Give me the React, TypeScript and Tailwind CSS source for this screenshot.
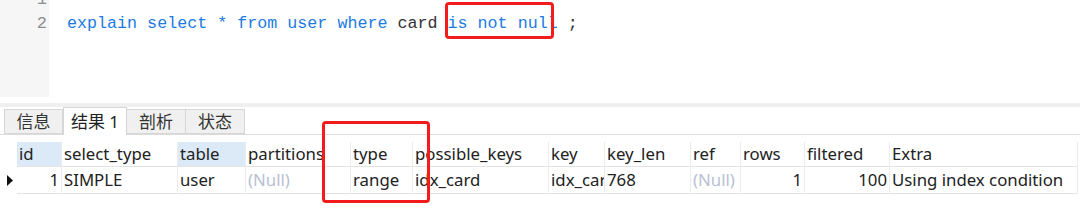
import React from "react";

const cols = [
  { key: "id", w: 45, hl: true, align: "right" },
  { key: "select_type", w: 116 },
  { key: "table", w: 68, hl: true },
  { key: "partitions", w: 105 },
  { key: "type", w: 62 },
  { key: "possible_keys", w: 136 },
  { key: "key", w: 56 },
  { key: "key_len", w: 86 },
  { key: "ref", w: 50 },
  { key: "rows", w: 64, align: "right" },
  { key: "filtered", w: 85, align: "right" },
  { key: "Extra", w: 188 },
];

const row: { v: string; nul?: boolean }[] = [
  { v: "1" },
  { v: "SIMPLE" },
  { v: "user" },
  { v: "(Null)", nul: true },
  { v: "range" },
  { v: "idx_card" },
  { v: "idx_card" },
  { v: "768" },
  { v: "(Null)", nul: true },
  { v: "1" },
  { v: "100" },
  { v: "Using index condition" },
];

const tabs = [
  { t: "信息", w: 59 },
  { t: "结果 1", w: 64, active: true },
  { t: "剖析", w: 59 },
  { t: "状态", w: 59 },
];

export default function App() {
  const ui = { fontFamily: '"Noto Sans", "Noto Sans CJK SC", sans-serif' };
  return (
    <div className="relative w-[1080px] h-[221px] bg-white overflow-hidden" style={ui}>
      {/* Editor */}
      <div className="flex h-[100px]">
        <div className="w-[49px] bg-[#f6f6f6] shrink-0 h-[97px] overflow-hidden">
          <div className="mt-[-12px] flex flex-col items-end pr-[2px] text-[17px] leading-[24px] text-[#8e8e8e]" style={{ fontFamily: '"Liberation Mono", monospace' }}>
            <div className="h-[24px]">1</div>
            <div className="h-[24px]">2</div>
          </div>
        </div>
        <div className="pl-[18px] pt-[12px] text-[16.7px] leading-[24px] whitespace-pre text-[#1b7be3]" style={{ fontFamily: '"Liberation Mono", monospace' }}>
          <span>explain select * from user where </span>
          <span className="text-[#333333]">card</span>
          <span> is not null</span>
          <span className="text-[#333333]"> ;</span>
        </div>
      </div>
      {/* splitter */}
      <div className="h-[3px]"></div>
      <div className="h-[4px] bg-[#efefef]"></div>
      {/* tabs */}
      <div className="flex items-end h-[28px] border-b border-[#dcdcdc] pl-[4px]">
        {tabs.map((t) => (
          <div
            key={t.t}
            className={
              t.active
                ? "h-[28px] mb-[-1px] bg-white border border-b-0 border-[#d6d6d6] flex items-center justify-center text-[17px] text-[#222]"
                : "h-[25px] bg-[#f0f0f0] border border-l-0 first:border-l border-[#d6d6d6] flex items-center justify-center text-[17px] text-[#333]"
            }
            style={{ width: t.w }}
          >
            {t.t}
          </div>
        ))}
      </div>
      {/* table */}
      <div className="mt-[7px] flex">
        <div className="w-[17px] shrink-0 flex flex-col">
          <div className="h-[25px]"></div>
          <div className="h-[27px] flex items-center pl-[7px]">
            <svg width="6" height="11" viewBox="0 0 6 11">
              <path d="M0 0 L6 5.5 L0 11 Z" fill="#111" />
            </svg>
          </div>
        </div>
        {cols.map((c, i) => (
          <div key={c.key} className="shrink-0 flex flex-col border-r border-[#ececec]" style={{ width: c.w }}>
            <div
              className={
                "h-[25px] border-b border-[#e3e3e3] px-[2px] flex items-center text-[16.8px] text-[#222] whitespace-nowrap overflow-hidden " +
                (c.hl ? "bg-[#dce9f6]" : "")
              }
            >
              {c.key}
            </div>
            <div
              className={
                "h-[27px] border-b border-[#e3e3e3] px-[2px] flex items-center text-[16.8px] whitespace-nowrap overflow-hidden " +
                (c.align === "right" ? "justify-end " : "") +
                (row[i].nul ? "text-[#b8c0d2]" : "text-[#222]")
              }
            >
              {row[i].v}
            </div>
          </div>
        ))}
      </div>
      {/* red highlights */}
      <div className="absolute left-[445px] top-[2px] w-[109px] h-[37px] border-[3px] border-[#f21c1c] rounded-[4px]"></div>
      <div className="absolute left-[322px] top-[121px] w-[108px] h-[82px] border-[3px] border-[#f21c1c] rounded-[4px]"></div>
    </div>
  );
}
